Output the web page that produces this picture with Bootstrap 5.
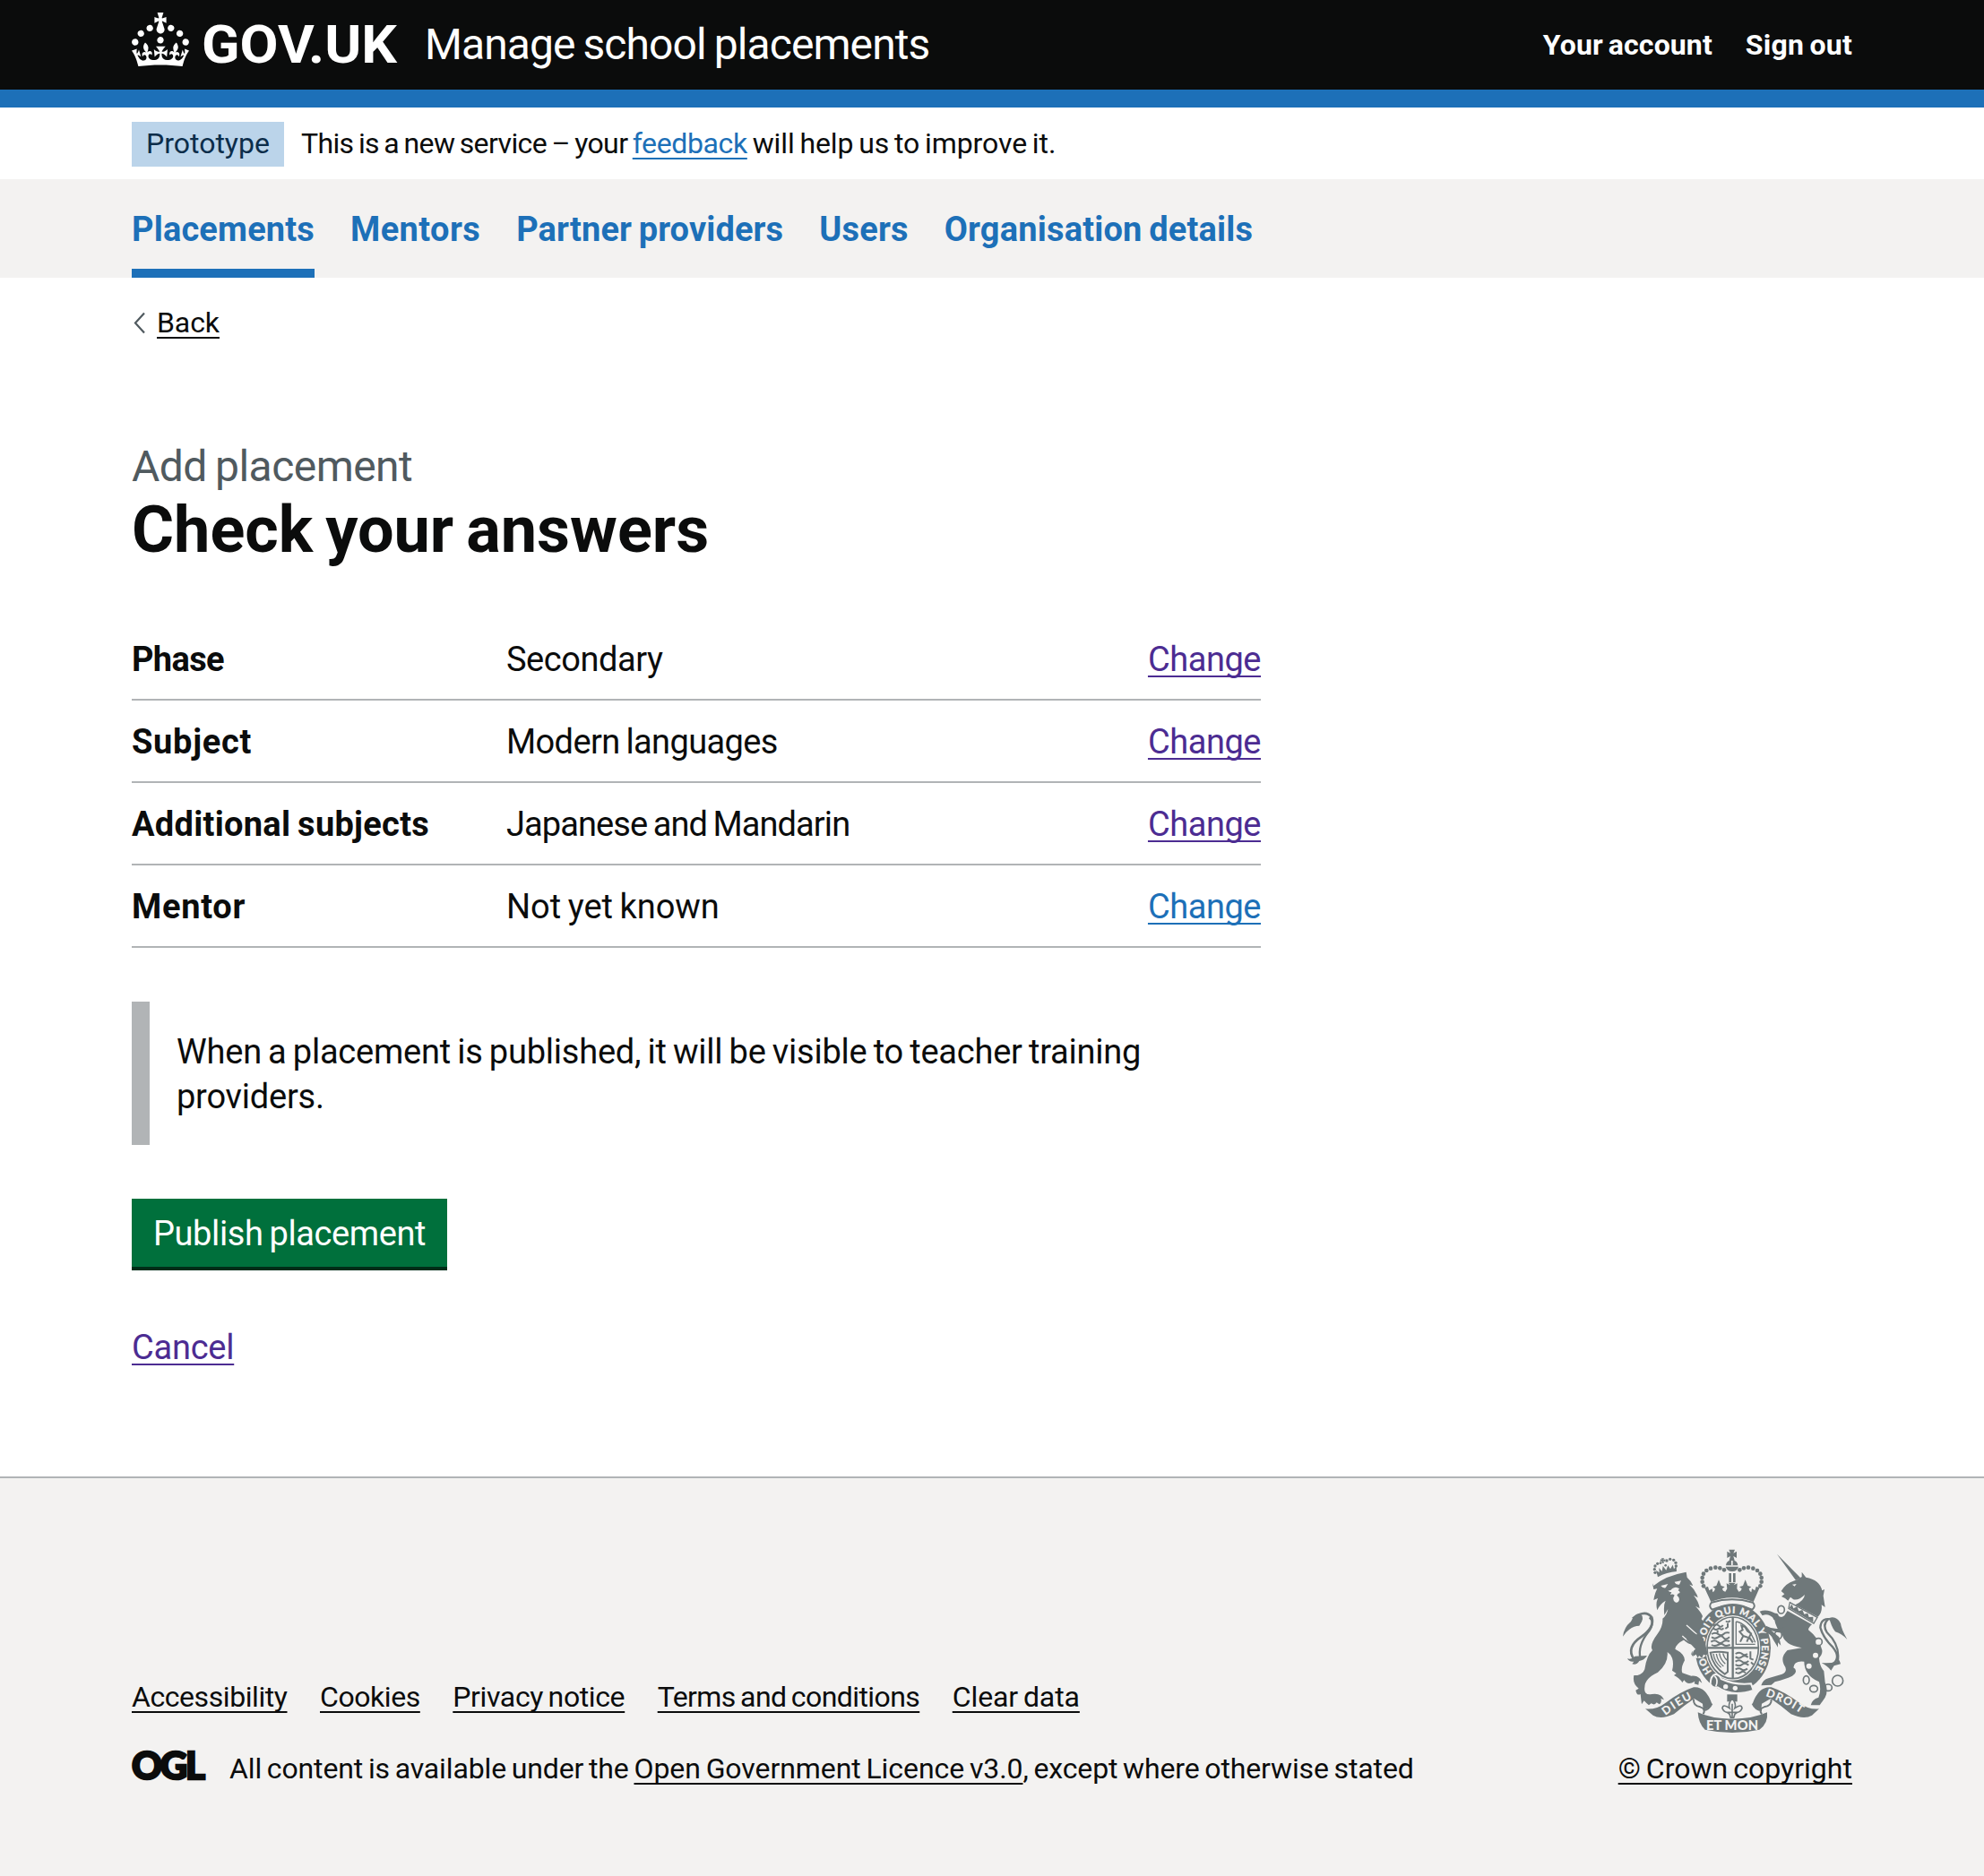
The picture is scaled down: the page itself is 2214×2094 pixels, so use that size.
<!DOCTYPE html>
<html lang="en">
<head>
<meta charset="utf-8">
<meta name="viewport" content="width=device-width, initial-scale=1">
<title>Check your answers - Manage school placements - GOV.UK</title>
<link href="https://cdn.jsdelivr.net/npm/bootstrap@5.3.0/dist/css/bootstrap.min.css" rel="stylesheet">
<style>
  body { font-family: Roboto, Arial, sans-serif; font-size: 38px; line-height: 50px; color: #0b0c0c; background: #f3f2f1; letter-spacing: -.46px; word-spacing: -2px; }
  a { text-decoration-thickness: 2px; text-underline-offset: 5px; text-decoration-skip-ink: none; color: #1d70b8; }
  .page-width { max-width: 1920px; padding: 0; margin: 0 auto; }
  .text-s { font-size: 32px; line-height: 40px; letter-spacing: -.43px; }
  .text-s a { text-underline-offset: 4.5px; }
  .ink-link { color: #0b0c0c; }
  .seen-link { color: #4c2c92; }

  .site-header { background: #0b0c0c; border-bottom: 20px solid #1d70b8; height: 120px; }
  .site-logo { width: 310px; height: 100px; margin-right: 17px; }
  .service-name { font-size: 48px; line-height: 60px; letter-spacing: -.92px; color: #fff; text-decoration: none; }
  .account-nav { gap: 37px; letter-spacing: .11px; }
  .account-nav a { color: #fff; text-decoration: none; font-weight: 700; }
  .account-nav .sign-out { letter-spacing: .25px; }

  .phase-banner { height: 80px; padding-top: 16px; }
  .phase-tag { background: #bbd4ea; color: #0c2d4a; padding: 4px 16px 6px; margin-right: 19px; letter-spacing: 0; }
  .phase-copy { letter-spacing: -.1px; padding-top: 4px; }
  .phase-copy .lead-in { letter-spacing: -.6px; }
  .phase-copy a { letter-spacing: -.38px; }

  .primary-nav { background: #f3f2f1; height: 110px; }
  .primary-nav .nav { gap: 40px; letter-spacing: .18px; }
  .primary-nav .nav-link { padding: 31px 0 19px; font-weight: 700; color: #1d70b8; border-bottom: 10px solid transparent; }
  .primary-nav .nav-link.active { border-color: #1d70b8; letter-spacing: .17px; }
  .primary-nav .nav-link.tight { letter-spacing: .12px; }
  .primary-nav .nav-link.wide { letter-spacing: .4px; }

  .page-main { padding: 30px 0 119px; }
  .back-link { padding-left: 2px; gap: 12px; letter-spacing: -.08px; margin-bottom: 109px; }
  .caption-xl { font-size: 48px; line-height: 64px; letter-spacing: -.56px; color: #505a5f; }
  .title-xl { font-size: 72px; line-height: 78px; letter-spacing: 0; word-spacing: -4px; font-weight: 700; margin: 0 0 59px; }
  .two-thirds { width: 1260px; }

  .answers { margin: 0; }
  .answer-row { border-bottom: 2px solid #b1b4b6; padding: 21px 0 19px; }
  .answer-row dt { width: 418px; letter-spacing: .29px; }
  .answer-row dd { margin: 0; }
  .answer-row dt.snug { letter-spacing: -.63px; }
  .answer-row dt.loose { letter-spacing: .7px; }
  .answer-row .snug-more { letter-spacing: -.92px; }
  .answer-row .airy { letter-spacing: 0; }
  .answer-row .modern { letter-spacing: -.62px; }

  .inset-note { border-left: 20px solid #b1b4b6; padding: 31px 30px 29px 30px; margin: 60px 0; letter-spacing: -.22px; }
  .btn-publish { display: block; background: #00703c; color: #fff; border: 0; border-radius: 0; box-shadow: 0 4px 0 #002d18; font-size: 38px; line-height: 50px; letter-spacing: -.4px; word-spacing: -2px; padding: 14px 24px 12px; margin-bottom: 65px; }
  .btn-publish:hover { background: #005a30; color: #fff; }
  .cancel-link { letter-spacing: -.24px; margin-bottom: -1px; vertical-align: top; }

  .site-footer { border-top: 2px solid #b1b4b6; padding: 70px 0 100px; }
  .footer-links { gap: 36.5px; margin-bottom: 40px; }
  .footer-links .privacy { letter-spacing: -.38px; }
  .footer-links .terms { letter-spacing: -.58px; }
  .footer-links .clear { letter-spacing: -.1px; }
  .ogl-mark { width: 96px; height: 52px; margin: -12px 19px -7px -6px; }
  .licence { letter-spacing: -.14px; }
  .licence a { letter-spacing: -.08px; }
  .copyright { letter-spacing: .02px; }
  .crest { width: 261px; height: 225px; display: block; margin-bottom: 9px; }
</style>
</head>
<body>
<header class="site-header">
  <div class="page-width d-flex align-items-center h-100">
    <svg class="site-logo" viewBox="0 0 310 100" role="img" aria-label="GOV.UK" fill="#fff">
      <path transform="translate(0 14) scale(2)" d="M22.6 10.4c-1 .4-2-.1-2.4-1-.4-.9.1-2 1-2.4.9-.4 2 .1 2.4 1s-.1 2-1 2.4m-5.9 6.7c-.9.4-2-.1-2.4-1-.4-.9.1-2 1-2.4.9-.4 2 .1 2.4 1s-.1 2-1 2.4m10.8-3.7c-1 .4-2-.1-2.4-1-.4-.9.1-2 1-2.4.9-.4 2 .1 2.4 1s0 2-1 2.4m3.3 4.8c-1 .4-2-.1-2.4-1-.4-.9.1-2 1-2.4.9-.4 2 .1 2.4 1s-.1 2-1 2.4M17 4.7l2.3 1.2V2.5l-2.3.7-.2-.2.9-3h-3.4l.9 3-.2.2c-.1.1-2.3-.7-2.3-.7v3.4L15 4.7c.1.1.1.2.2.2l-1.3 4c-.1.2-.1.4-.1.6 0 1.1.8 2 1.9 2.2h.7c1-.2 1.9-1.1 1.9-2.1 0-.2 0-.4-.1-.6l-1.3-4c-.1-.2 0-.2.1-.3m-7.6 5.7c.9.4 2-.1 2.4-1 .4-.9-.1-2-1-2.4-.9-.4-2 .1-2.4 1s0 2 1 2.4m-5 3c.9.4 2-.1 2.4-1 .4-.9-.1-2-1-2.4-.9-.4-2 .1-2.4 1s.1 2 1 2.4m-3.2 4.8c.9.4 2-.1 2.4-1 .4-.9-.1-2-1-2.4-.9-.4-2 .1-2.4 1s0 2 1 2.4m14.8 11c4.4 0 8.6.3 12.3.8 1.1-4.5 2.4-7 3.7-8.8l-2.5-.9c.2 1.3.3 1.9 0 2.7-.4-.4-.8-1.1-1.1-2.3l-1.2 4c.7-.5 1.3-.8 2-.9-1.1 2.5-2.6 3.1-3.5 3-1.1-.2-1.7-1.2-1.5-2.1.3-1.2 1.5-1.5 2.1-.1 1.1-2.3-.8-3-2-2.3 1.9-1.9 2.1-3.5.6-5.6-2.1 1.6-2.1 3.2-1.2 5.5-1.2-1.4-3.2-.6-2.5 1.6.9-1.4 2.1-.5 1.9.8-.2 1.1-1.7 2.1-3.5 1.9-2.7-.2-2.9-2.1-2.9-3.6.7-.1 1.9.5 2.9 1.9l.4-4.3c-1.1 1.1-2.1 1.4-3.2 1.4.4-1.2 2.1-3 2.1-3h-5.4s1.7 1.9 2.1 3c-1.1 0-2.1-.2-3.2-1.4l.4 4.3c1-1.4 2.2-2 2.9-1.9-.1 1.5-.2 3.4-2.9 3.6-1.9.2-3.4-.8-3.5-1.9-.2-1.3 1-2.2 1.9-.8.7-2.3-1.2-3-2.5-1.6.9-2.2.9-3.9-1.2-5.5-1.5 2-1.3 3.7.6 5.6-1.2-.7-3.1 0-2 2.3.6-1.4 1.8-1.1 2.1.1.2.9-.3 1.9-1.5 2.1-.9.2-2.4-.5-3.5-3 .6 0 1.2.3 2 .9l-1.2-4c-.3 1.1-.7 1.9-1.1 2.3-.3-.8-.2-1.4 0-2.7l-2.9.9C1.3 23 2.6 25.5 3.7 30c3.7-.5 7.9-.8 12.3-.8"/>
      <text x="78" y="70" font-family="Roboto, sans-serif" font-weight="700" font-size="60" letter-spacing="0" textLength="218" lengthAdjust="spacingAndGlyphs">GOV.UK</text>
    </svg>
    <a class="service-name" href="#">Manage school placements</a>
    <nav class="account-nav text-s d-flex ms-auto">
      <a href="#">Your account</a>
      <a class="sign-out" href="#">Sign out</a>
    </nav>
  </div>
</header>

<div class="phase-banner bg-white text-s">
  <div class="page-width d-flex align-items-start">
    <strong class="phase-tag fw-normal">Prototype</strong>
    <span class="phase-copy"><span class="lead-in">This is a new service – your </span><a href="#">feedback</a> will help us to improve it.</span>
  </div>
</div>

<nav class="primary-nav">
  <div class="page-width">
    <div class="nav">
      <a class="nav-link active" href="#">Placements</a>
      <a class="nav-link wide" href="#">Mentors</a>
      <a class="nav-link tight" href="#">Partner providers</a>
      <a class="nav-link" href="#">Users</a>
      <a class="nav-link" href="#">Organisation details</a>
    </div>
  </div>
</nav>

<main class="page-main bg-white">
  <div class="page-width">
    <div class="back-link text-s d-flex">
      <svg width="14" height="40" viewBox="0 0 14 40" fill="none" stroke="#505a5f" stroke-width="2.200"><path d="M12 9.500L2 20.500L12 31.500"/></svg>
      <a class="ink-link" href="#">Back</a>
    </div>
    <div class="two-thirds">
      <div class="caption-xl">Add placement</div>
      <h1 class="title-xl">Check your answers</h1>

      <dl class="answers">
        <div class="answer-row d-flex">
          <dt class="snug">Phase</dt>
          <dd class="flex-grow-1">Secondary</dd>
          <dd><a class="seen-link" href="#">Change</a></dd>
        </div>
        <div class="answer-row d-flex">
          <dt class="loose">Subject</dt>
          <dd class="flex-grow-1 modern">Modern languages</dd>
          <dd><a class="seen-link" href="#">Change</a></dd>
        </div>
        <div class="answer-row d-flex">
          <dt>Additional subjects</dt>
          <dd class="flex-grow-1 snug-more">Japanese and Mandarin</dd>
          <dd><a class="seen-link" href="#">Change</a></dd>
        </div>
        <div class="answer-row d-flex">
          <dt class="loose">Mentor</dt>
          <dd class="flex-grow-1 airy">Not yet known</dd>
          <dd><a href="#">Change</a></dd>
        </div>
      </dl>

      <div class="inset-note">When a placement is published, it will be visible to teacher training providers.</div>

      <button type="button" class="btn btn-publish">Publish placement</button>
      <a class="cancel-link seen-link d-inline-block" href="#">Cancel</a>
    </div>
  </div>
</main>

<footer class="site-footer text-s">
  <div class="page-width d-flex align-items-end justify-content-between">
    <div>
      <div class="footer-links d-flex">
        <a class="ink-link" href="#">Accessibility</a>
        <a class="ink-link" href="#">Cookies</a>
        <a class="ink-link privacy" href="#">Privacy notice</a>
        <a class="ink-link terms" href="#">Terms and conditions</a>
        <a class="ink-link clear" href="#">Clear data</a>
      </div>
      <div class="licence d-flex align-items-start">
        <svg class="ogl-mark" viewBox="-6 -12 96 52" role="img" aria-label="Open Government Licence" fill="#0b0c0c" stroke="#0b0c0c" stroke-width="2.500">
          <text x="0" y="31.500" font-family="Lato, sans-serif" font-weight="900" font-size="42" letter-spacing="0" textLength="82">OGL</text>
        </svg>
        <span>All content is available under the <a class="ink-link" href="#">Open Government Licence v3.0</a>, except where otherwise stated</span>
      </div>
    </div>
    <div>
      <svg class="crest" viewBox="18 0 783 675" role="img" aria-label="Royal coat of arms" fill="#6f787a">
        <!-- lion: crown, body, tail -->
        <g>
          <path d="M159 60l5 4-2-6h9l-2 6 6-3v9l-6-3 2 7h-8l1-7-6 3zM150 121Q180 104 213 102L212 84 204 94 200 80 192 94 184 82 178 98 167 84 164 102 154 90 155 106 144 98Z"/>
          <g><circle cx="141" cy="106" r="5"/><circle cx="139" cy="95" r="5"/><circle cx="141" cy="84" r="5"/><circle cx="149" cy="76" r="5"/><circle cx="159" cy="74" r="4"/><circle cx="180" cy="66" r="5"/><circle cx="191" cy="61" r="5"/><circle cx="203" cy="64" r="5"/><circle cx="210" cy="73" r="5"/><circle cx="211" cy="84" r="5"/><circle cx="176" cy="82" r="4"/></g>
          <path d="M132 142L136 150Q176 116 245 104L248 122Q262 134 268 150L256 146Q278 166 284 190L270 182Q288 204 290 226L276 218Q296 240 300 252L296 262 310 278Q300 300 306 345L312 372Q316 386 302 378L298 390Q290 382 282 388 284 378 276 378L270 390 262 380Q262 368 274 362 268 352 272 346 255 350 235 330L240 330Q210 345 208 362 240 378 240 400 226 425 232 442L262 452Q280 450 292 462L298 476 288 468 286 482 272 478 274 470Q250 486 238 466L232 474Q224 460 204 450L212 444 198 434Q204 410 198 392 192 378 182 372 186 410 150 440 106 460 106 490 102 518 130 513 162 508 171 532L160 528Q165 540 155 547L146 541Q140 552 128 544L120 550Q110 542 104 535L96 547Q94 530 92 513 80 520 76 500L86 494Q64 478 70 450L82 450Q100 445 106 430 112 385 132 366 120 350 150 310 168 285 166 260 180 250 184 228L172 248Q168 215 176 200 156 212 148 232 142 210 150 192L136 198Q138 180 148 160L136 162Z"/>
          <path d="M66 260Q108 228 130 256 140 288 96 320 42 356 70 396" fill="none" stroke="#6f787a" stroke-width="8"/>
          <path d="M122 256Q140 270 122 300 80 350 92 396" fill="none" stroke="#6f787a" stroke-width="7"/>
          <path d="M33 320Q36 290 60 270 72 240 92 244 108 258 88 284 70 284 55 296 42 305 33 320ZM48 394Q62 398 74 386L114 384Q104 400 88 402 80 416 64 412L70 404Q54 406 48 394Z"/>
          <g fill="#f3f2f1"><path d="M160 150l24-6-8 13q-10 2-16-7zM206 137l22-4-6 13q-12 1-16-9z"/><path d="M184 166q10 2 14-6 12-10 24 0l-4 6q6 2 6 8l-6 2-4 6q8 6 8 14-2 12-12 10-10-4-8-16l4-8q-6-6-14-2l4-8q-8 0-12-6z"/></g>
          <path d="M246 282L300 330M232 318Q248 334 262 338" fill="none" stroke="#f3f2f1" stroke-width="4"/>
        </g>
        <!-- central crown -->
        <g>
          <path d="M388 29h20l-5 12 11-6v22l-11-6 4 14h-18l4-14-11 6V35l11 6zM378 82a20 18 0 0 1 40 0zM377 86h43q-4 16-21 16t-22-16z"/>
          <path d="M396 66h5v16h-5z" fill="#f3f2f1"/>
          <path d="M388 108h8v30h-8zM402 108h8v30h-8z"/>
          <g><circle cx="372" cy="97" r="7"/><circle cx="358" cy="91" r="7"/><circle cx="343" cy="89" r="7"/><circle cx="327" cy="92" r="7"/><circle cx="313" cy="99" r="7"/><circle cx="303" cy="110" r="7"/><circle cx="299" cy="123" r="7"/><circle cx="299" cy="137" r="7"/><circle cx="303" cy="151" r="7"/></g>
          <g><circle cx="424" cy="97" r="7"/><circle cx="438" cy="91" r="7"/><circle cx="453" cy="89" r="7"/><circle cx="469" cy="92" r="7"/><circle cx="483" cy="99" r="7"/><circle cx="493" cy="110" r="7"/><circle cx="497" cy="123" r="7"/><circle cx="497" cy="137" r="7"/><circle cx="493" cy="151" r="7"/></g>
          <path d="M306 156L318 153 322 166 332 160 334 172Q340 170 342 160L334 154 346 150 354 130 362 150 374 154 366 160Q368 170 376 170L382 160 380 142 392 148 386 140H410L404 148 416 142 415 160 421 170Q428 170 431 160L423 154 435 150 443 130 451 150 463 154 455 160Q457 170 463 172L465 160 475 166 479 153 491 156 470 204Q398 176 328 204Z"/>
          <path d="M330 206Q398 186 468 206 480 218 466 230 398 202 332 230 318 218 330 206Z" fill="#f3f2f1" stroke="#6f787a" stroke-width="6"/>
        </g>
        <!-- garter and shield -->
        <g>
          <ellipse cx="401" cy="358" rx="127" ry="148"/>
          <ellipse cx="401" cy="358" rx="92" ry="109" fill="#f3f2f1"/>
          <ellipse cx="401" cy="358" rx="86" ry="103" fill="none" stroke="#6f787a" stroke-width="5"/>
          <path d="M401 255V461M315 358H487" stroke="#6f787a" stroke-width="7" fill="none"/>
          <g fill="none" stroke="#6f787a" stroke-width="6">
            <path d="M334 284q12-8 20 0t14-2M336 292q8 10 20 0 8 8 14 0M378 268q8 8 14-2M330 312q12-8 22 0t18 0 20-4M330 322q10 8 22 0t18 2 20-2M328 338q12-8 22 0t18 0 22-2M330 348q10 6 22 0t18 0 22 0M384 276v12l-8 6M350 300v8M376 326v8"/>
            <path d="M410 378q14-8 22 0t18 0M410 388q12 8 22 0t20 2M410 404q12-8 22 0t22-2M410 414q12 8 22 0t22 2M410 430q12-6 20 0t20-2M410 440q10 6 18 0t16 2M460 370v24l10 4M462 406l8 8"/>
            <path d="M412 270V346H476M412 270Q450 276 476 340" stroke-width="4"/>
            <path d="M426 338l10-20-12-14 10-6-4-14 12 4 8 14 12 8-6 12 12 18M436 318l18 6-6 14"/>
          </g>
          <path d="M326 374Q352 368 384 374V438L374 446Q334 420 326 374Z" fill="none" stroke="#6f787a" stroke-width="6"/>
          <path d="M336 378Q340 406 362 424M346 378Q350 404 370 420M356 376Q360 398 376 412M368 376Q372 392 382 400" fill="none" stroke="#6f787a" stroke-width="4"/>
          <path id="garterLine" d="M331.100 437.200A97 115.500 0 0 1 401 242.500A97 115.500 0 0 1 463.700 446" fill="none"/>
          <text font-family="Lato, sans-serif" font-weight="900" font-size="32" letter-spacing="0" word-spacing="0" fill="#f3f2f1" stroke="#f3f2f1" stroke-width=".8"><textPath href="#garterLine" textLength="496" lengthAdjust="spacing">HONI SOIT QUI MAL Y PENSE</textPath></text>
          <path d="M262 338L280 330 308 350 316 380 300 392 268 392Z" fill="#f3f2f1"/>
          <path d="M250 300L300 322Q312 350 316 374 316 388 303 380L298 392 288 384 284 392 278 380 268 386Q264 370 276 362L246 330Z"/>
          <path d="M326 480Q326 450 344 446 358 450 362 462 410 484 462 478L470 500Q400 524 350 490 336 496 326 480Z" stroke="#f3f2f1" stroke-width="6"/>
          <path d="M340 452Q354 466 344 488" fill="none" stroke="#f3f2f1" stroke-width="5"/>
          <circle cx="377" cy="488" r="8" fill="#f3f2f1"/><circle cx="409" cy="493" r="8" fill="#f3f2f1"/>
        </g>
        <!-- unicorn: horn, head, body, tail, chain -->
        <g>
          <path d="M549 44L628 124 612 132Z"/>
          <path d="M563 168Q578 142 604 134L616 130 632 120 632 104 646 122Q692 130 700 166L708 162 704 184 710 222 698 214Q702 238 686 254L610 214Q640 200 642 180 622 200 604 196L594 188 586 200 576 192 564 186 574 178Z"/>
          <path d="M600 146l14-2-6 8z" fill="#f3f2f1"/>
          <path d="M592 206L684 256 672 276 588 226Z" fill="#f3f2f1" stroke="#6f787a" stroke-width="4"/>
          <path d="M590 224L599 212 604 226 616 220 622 235 634 231 640 245 652 242 656 255 670 254 670 272Z"/>
          <path d="M584 234L666 280Q654 290 654 298 690 326 700 366 702 380 690 392 692 420 706 436L710 474Q722 500 710 524L692 550 662 550Q666 530 688 524 698 500 690 472 640 450 640 404 606 400 604 424 622 436 600 452 580 462 542 472L530 482 496 484Q502 464 520 460L566 446Q588 436 572 414 560 388 584 366L632 358Q570 348 566 310 546 296 540 262 520 240 500 250L491 236Q516 226 546 244 560 262 574 250Z"/>
          <path d="M572 290Q540 300 512 284L506 304Q530 312 536 330L552 356 552 340 562 350 556 322 530 300Q560 312 576 304Z"/>
          <path d="M738 264Q696 252 694 290 704 326 736 356 764 390 736 412" fill="none" stroke="#6f787a" stroke-width="7"/>
          <path d="M720 262Q700 280 716 306 762 350 752 404" fill="none" stroke="#6f787a" stroke-width="7"/>
          <path d="M724 258Q748 250 762 276 764 294 784 330 768 312 744 304 730 286 724 258ZM698 408Q730 412 758 400L762 412 740 418 730 434Q720 420 698 408Z"/>
          <g fill="none" stroke="#6f787a" stroke-width="5"><ellipse cx="563" cy="230" rx="11" ry="13"/><ellipse cx="545" cy="254" rx="7" ry="9"/><ellipse cx="553" cy="315" rx="12" ry="14"/><circle cx="688" cy="338" r="12" fill="#f3f2f1"/><ellipse cx="647" cy="466" rx="10" ry="14"/><ellipse cx="672" cy="495" rx="13" ry="11"/><ellipse cx="720" cy="491" rx="13" ry="11"/><circle cx="752" cy="468" r="18"/></g>
          <circle cx="678" cy="383" r="9" fill="#f3f2f1"/><circle cx="656" cy="419" r="9" fill="#f3f2f1"/>
        </g>
        <!-- motto scroll -->
        <g>
          <path d="M108 562Q145 566 176 542 228 504 270 490 310 486 331 545 322 562 302 566L300 545 272 528Q236 552 204 580 160 600 134 584Z"/>
          <path d="M690 562Q655 566 624 542 572 504 530 490 488 486 467 545 476 562 496 566L498 545 528 528Q564 552 596 580 640 600 666 584Z"/>
          <path d="M284 574Q330 596 399 596T516 574Q520 612 490 632 399 652 308 632 286 612 284 574Z"/>
          <path d="M270 530Q268 552 292 556 312 562 302 580M331 545Q322 566 302 568M530 530Q532 552 506 556 486 562 498 580M467 545Q476 566 498 568" fill="none" stroke="#6f787a" stroke-width="6"/>
          <path id="mottoLeft" d="M176 585Q222 548 276 524" fill="none"/><path id="mottoRight" d="M510 519Q580 542 638 585" fill="none"/>
          <g font-family="Lato, sans-serif" font-weight="900" font-size="38" letter-spacing="0" word-spacing="0" fill="#f3f2f1">
            <text><textPath href="#mottoLeft" textLength="106">DIEU</textPath></text>
            <text><textPath href="#mottoRight" textLength="132">DROIT</textPath></text>
            <text x="312" y="632" font-size="44" textLength="174">ET MON</text>
          </g>
          <path d="M382 514H416V538H382Z"/>
          <path d="M399 528Q414 544 408 560 430 544 432 560 428 572 416 574L408 580 404 592H394L390 580 382 574Q370 572 366 560 368 544 390 560 384 544 399 528ZM384 574H414M399 545V590" fill="#f3f2f1" stroke="#6f787a" stroke-width="5"/>
        </g>
      </svg>
      <a class="ink-link copyright d-block" href="#">© Crown copyright</a>
    </div>
  </div>
</footer>
<script src="https://cdn.jsdelivr.net/npm/bootstrap@5.3.0/dist/js/bootstrap.bundle.min.js"></script>
</body>
</html>
